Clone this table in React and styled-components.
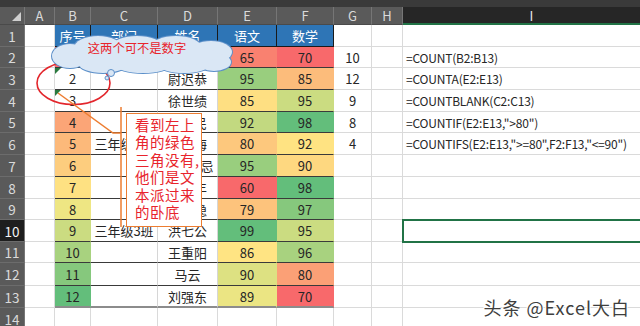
import React from "react";
import styled, { createGlobalStyle, css } from "styled-components";

const GlobalStyle = createGlobalStyle`
  *, *::before, *::after { box-sizing: border-box; }
  html, body { margin: 0; padding: 0; background: #fff; }
  body {
    font-family: "Noto Sans CJK SC", "Noto Sans", sans-serif;
    overflow: hidden;
  }
`;

// 列宽：行号 + A..I
const COL_WIDTHS = "25px 30px 36px 67px 60px 59px 57px 38px 31px 258px";
const ROW_HEIGHTS = "18px 22px 21px 22px 22px 21px 22px 22px 22px 21px 22px 21px 23px 22px 22px";
const LETTERS = ["A", "B", "C", "D", "E", "F", "G", "H", "I"];

const ROWS = [
  { b: "序号", c: "部门", d: "姓名", e: "语文", f: "数学", head: true },
  { b: 1, c: "三年级3班", d: "程咬金", e: 65, f: 70, g: 10, i: "=COUNT(B2:B13)" },
  { b: "2", d: "尉迟恭", e: 95, f: 85, g: 12, i: "=COUNTA(E2:E13)", flag: true },
  { b: "3", d: "徐世绩", e: 85, f: 95, g: 9, i: "=COUNTBLANK(C2:C13)", flag: true },
  { b: 4, d: "李世民", e: 92, f: 98, g: 8, i: '=COUNTIF(E2:E13,">80")' },
  { b: 5, c: "三年级3班", d: "杜如海", e: 80, f: 92, g: 4, i: '=COUNTIFS(E2:E13,">=80",F2:F13,"<=90")' },
  { b: 6, d: "长孙无忌", e: 95, f: 90 },
  { b: 7, d: "张三丰", e: 60, f: 98 },
  { b: 8, d: "李靖隐", e: 79, f: 97 },
  { b: 9, c: "三年级3班", d: "洪七公", e: 99, f: 95 },
  { b: 10, d: "王重阳", e: 86, f: 96 },
  { b: 11, d: "马云", e: 90, f: 80 },
  { b: 12, d: "刘强东", e: 89, f: 70 },
  {},
];

const RED = [248, 105, 107];
const YELLOW = [255, 235, 132];
const GREEN = [99, 190, 123];

function mix(a, b, t) {
  return `rgb(${a.map((v, i) => Math.round(v + (b[i] - v) * t)).join(",")})`;
}

function median(list) {
  const s = [...list].sort((x, y) => x - y);
  const n = s.length;
  return n % 2 ? s[(n - 1) / 2] : (s[n / 2 - 1] + s[n / 2]) / 2;
}

// 三色刻度：最小值红、中位数黄、最大值绿（文本不参与）
function makeScale(values) {
  const nums = values.filter((v) => typeof v === "number");
  const min = Math.min(...nums);
  const max = Math.max(...nums);
  const mid = median(nums);
  return (v) => {
    if (typeof v !== "number") return null;
    if (v <= mid) return mix(RED, YELLOW, (v - min) / (mid - min));
    return mix(YELLOW, GREEN, (v - mid) / (max - mid));
  };
}

const dataRows = ROWS.slice(1, 13);
const scaleB = makeScale(dataRows.map((r) => r.b));
const scaleE = makeScale(dataRows.map((r) => r.e));
const scaleF = makeScale(dataRows.map((r) => r.f));

const Page = styled.div`
  position: relative;
  width: 640px;
  height: 326px;
  overflow: hidden;
  background: #fff;
`;

const TopStrip = styled.div`
  height: 7px;
  background: #3a3a3a;
`;

const Sheet = styled.div`
  display: grid;
  grid-template-columns: ${COL_WIDTHS};
  grid-template-rows: ${ROW_HEIGHTS};
`;

const Corner = styled.div`
  position: relative;
  background: #5a5a5a;
  border-right: 1px solid #767676;
  border-bottom: 1px solid #4a4a4a;

  &::after {
    content: "";
    position: absolute;
    right: 3px;
    bottom: 3px;
    border-left: 9px solid transparent;
    border-bottom: 9px solid #cfcfcf;
  }
`;

const ColHead = styled.div`
  display: flex;
  align-items: center;
  justify-content: center;
  background: ${(p) => (p.$active ? "#262626" : "#5a5a5a")};
  color: ${(p) => (p.$active ? "#e8e8e8" : "#dadada")};
  border-right: 1px solid #767676;
  border-bottom: ${(p) => (p.$active ? "2px solid #217346" : "1px solid #4a4a4a")};
  font-size: 13px;
`;

const RowHead = styled.div`
  display: flex;
  align-items: center;
  justify-content: center;
  background: ${(p) => (p.$active ? "#1e1e1e" : "#5a5a5a")};
  color: ${(p) => (p.$active ? "#f4f4f4" : "#dadada")};
  border-right: 1px solid #767676;
  border-bottom: 1px solid #6c6c6c;
  font-size: 13.5px;
`;

const Cell = styled.div`
  position: relative;
  display: flex;
  align-items: center;
  justify-content: ${(p) => (p.$left ? "flex-start" : "center")};
  padding: ${(p) => (p.$left ? "0 3px" : "0")};
  background: ${(p) => p.$bg || "#fff"};
  color: ${(p) => p.$color || "#262626"};
  border-right: 1px solid ${(p) => p.$right || "#dadada"};
  border-bottom: ${(p) => p.$bottom || "1px solid #dadada"};
  font-size: ${(p) => (p.$left ? "12px" : "13px")};
  letter-spacing: ${(p) => (p.$left ? "-0.2px" : "0")};
  white-space: nowrap;

  ${(p) =>
    p.$flag &&
    css`
      &::before {
        content: "";
        position: absolute;
        left: 0;
        top: 0;
        border-top: 6px solid #2a7a3f;
        border-right: 6px solid transparent;
      }
    `}

  ${(p) =>
    p.$selected &&
    css`
      outline: 2px solid #217346;
      outline-offset: -1px;
      z-index: 1;
    `}
`;

const Overlay = styled.svg`
  position: absolute;
  left: 0;
  top: 0;
  pointer-events: none;
`;

const Callout = styled.div`
  position: absolute;
  left: 126px;
  top: 113px;
  width: 76px;
  height: 114px;
  padding: 2px 0 0 8px;
  background: #fff;
  border: 1.5px solid #ed7d31;
  color: #e8242c;
  font-size: 14.5px;
  letter-spacing: 0.5px;
  line-height: 17.4px;
  white-space: nowrap;
  overflow: hidden;
`;

const Cloud = styled.div`
  position: absolute;
  left: 51px;
  top: 35px;
  width: 183px;
  height: 46px;
`;

const CloudText = styled.div`
  position: absolute;
  left: 0;
  right: 11px;
  top: 5px;
  text-align: center;
  color: #e8242c;
  font-size: 12.3px;
  line-height: 16px;
  white-space: nowrap;
`;

const Watermark = styled.div`
  position: absolute;
  right: 10px;
  bottom: 6px;
  color: #3e3e3e;
  font-size: 18px;
  letter-spacing: 1px;
  text-shadow: 0 0 2px #fff, 0 0 2px #fff, 1px 1px 0 #fff, -1px -1px 0 #fff;
`;

const CLOUD_PARTS = [
  [19, 21, 18, 12],
  [47, 13, 24, 12],
  [86, 11, 25, 10],
  [125, 12, 25, 11],
  [160, 17, 21, 11],
  [163, 27, 17, 9],
  [133, 30, 25, 8],
  [92, 30, 27, 8],
  [52, 29, 24, 9],
  [92, 20, 75, 13],
];

function CloudShape() {
  return (
    <svg width="183" height="46" viewBox="0 0 183 46">
      <g fill="#dae7f5" stroke="#5b8fc9" strokeWidth="2">
        {CLOUD_PARTS.map(([cx, cy, rx, ry], k) => (
          <ellipse key={k} cx={cx} cy={cy} rx={rx} ry={ry} />
        ))}
      </g>
      <g fill="#dae7f5">
        {CLOUD_PARTS.map(([cx, cy, rx, ry], k) => (
          <ellipse key={k} cx={cx} cy={cy} rx={rx} ry={ry} />
        ))}
      </g>
      <circle cx="60" cy="38" r="3.5" fill="#dae7f5" stroke="#5b8fc9" strokeWidth="1" />
      <circle cx="56" cy="43" r="2" fill="#dae7f5" stroke="#5b8fc9" strokeWidth="1" />
    </svg>
  );
}

function tableCell(row, n, key, scale) {
  const v = row[key];
  if (row.head) {
    return { $bg: "#2e75b6", $color: "#fff", $right: "#1a1a1a", $bottom: "1px solid #1a1a1a", text: v };
  }
  const bg = scale ? scale(v) : null;
  return {
    $bg: bg || "#fff",
    $right: bg || "#d6d6d6",
    $bottom: n === 13 ? "2px solid #8c8c8c" : "1px solid #3a3a3a",
    text: v,
  };
}

export default function App() {
  return (
    <Page>
      <GlobalStyle />
      <TopStrip />
      <Sheet>
        <Corner />
        {LETTERS.map((l) => (
          <ColHead key={l} $active={l === "I"}>
            {l}
          </ColHead>
        ))}

        {ROWS.map((row, idx) => {
          const n = idx + 1;
          const inTable = n <= 13;
          const cells = [];
          cells.push(<RowHead key="h" $active={n === 10}>{n}</RowHead>);
          cells.push(<Cell key="a" />);
          [
            ["b", scaleB],
            ["c", null],
            ["d", null],
            ["e", scaleE],
            ["f", scaleF],
          ].forEach(([key, scale]) => {
            if (!inTable) {
              cells.push(<Cell key={key} />);
              return;
            }
            const { text, ...props } = tableCell(row, n, key, scale);
            cells.push(
              <Cell key={key} {...props} $flag={key === "b" && row.flag}>
                {text}
              </Cell>
            );
          });
          cells.push(<Cell key="g">{row.g}</Cell>);
          cells.push(<Cell key="hh" />);
          cells.push(
            <Cell key="i" $left $selected={n === 10}>
              {row.i}
            </Cell>
          );
          return cells;
        })}
      </Sheet>

      <Overlay width="640" height="326" viewBox="0 0 640 326">
        <ellipse cx="73.5" cy="83" rx="36.5" ry="21.5" fill="none" stroke="#e3262c" strokeWidth="1.6" />
        <polyline points="58,93 113,133 121,133" fill="none" stroke="#ed7d31" strokeWidth="1.5" />
        <line x1="121" y1="107" x2="121" y2="227" stroke="#ed7d31" strokeWidth="1.5" />
      </Overlay>

      <Callout>
        <div>看到左上</div>
        <div>角的绿色</div>
        <div>三角没有,</div>
        <div>他们是文</div>
        <div>本派过来</div>
        <div>的卧底</div>
      </Callout>

      <Cloud>
        <CloudShape />
        <CloudText>这两个可不是数字</CloudText>
      </Cloud>

      <Watermark>头条 @Excel大白</Watermark>
    </Page>
  );
}
